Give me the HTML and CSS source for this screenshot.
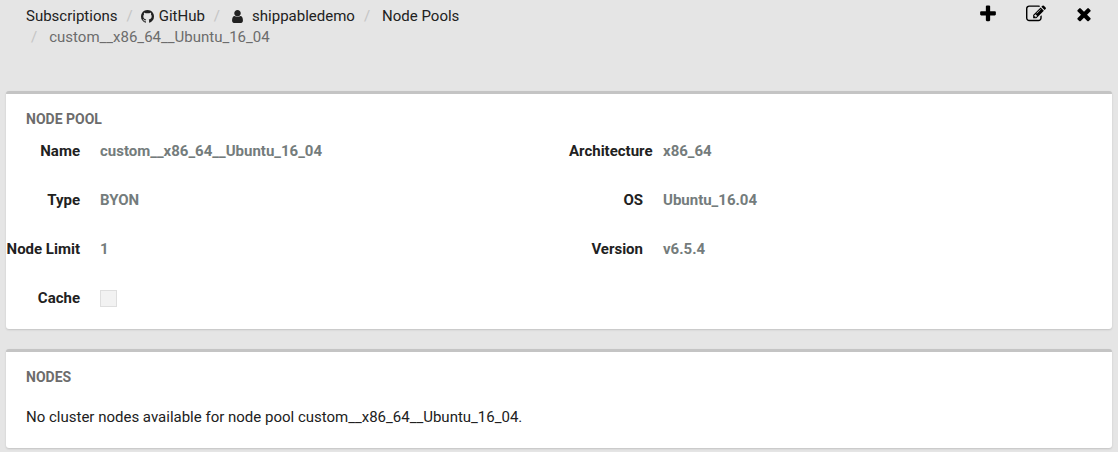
FILE: index.html
```html
<!DOCTYPE html>
<html lang="en">
<head>
<meta charset="utf-8">
<title>Node Pool</title>
<link rel="stylesheet" href="styles.css">
</head>
<body>
<header class="topbar">
  <nav aria-label="Breadcrumb">
    <ol class="breadcrumb">
      <li><a href="#">Subscriptions</a></li>
      <li><a href="#"><svg class="icon-github" viewBox="0 128 1536 1536" aria-hidden="true"><path d="M768 128q209 0 385.500 103t279.500 279.500 103 385.500q0 251-146.500 451.500t-378.500 277.500q-27 5-40-7t-13-30q0-3 .5-76.500t.5-134.500q0-97-52-142 57-6 102.500-18t94-39 81-66.500 53-105 20.500-150.500q0-119-79-206 37-91-8-204-28-9-81 11t-92 44l-38 24q-93-26-192-26t-192 26q-16-11-42.500-27t-83.500-38.500-85-13.500q-45 113-8 204-79 87-79 206 0 85 20.500 150t52.500 105 80.500 67 94 39 102.500 18q-39 36-49 103-21 10-45 15t-57 5-65.500-21.500-55.500-62.500q-19-32-48.500-52t-49.500-24l-20-3q-21 0-29 4.500t-5 11.500 9 14 13 12l7 5q22 10 43.500 38t31.500 51l10 23q13 38 44 61.500t67 30 69.500 7 55.500-3.500l23-4q0 38 .5 88.500t.5 54.500q0 18-13 30t-40 7q-232-77-378.500-277.500t-146.500-451.500q0-209 103-385.500t279.500-279.500 385.500-103z"/></svg>GitHub</a></li>
      <li class="wide"><a href="#"><svg class="icon-user" viewBox="256 128 1280 1536" aria-hidden="true"><path d="M1536 1399q0 109-62.500 187t-150.500 78h-854q-88 0-150.500-78t-62.500-187q0-85 8.500-160.500t31.500-152 58.500-131 94-89 134.500-34.500q131 128 313 128t313-128q76 0 134.500 34.500t94 89 58.500 131 31.500 152 8.500 160.500zm-256-887q0 159-112.500 271.500t-271.500 112.500-271.500-112.500-112.500-271.500 112.500-271.500 271.500-112.500 271.500 112.500 112.500 271.500z"/></svg>shippabledemo</a></li>
      <li class="wide"><a href="#">Node Pools</a></li>
      <li class="wide current" aria-current="page">custom__x86_64__Ubuntu_16_04</li>
    </ol>
  </nav>
  <div class="actions">
    <button type="button" aria-label="Add"><svg viewBox="0 0 1792 1792" aria-hidden="true"><path d="M1600 736v192q0 40-28 68t-68 28h-416v416q0 40-28 68t-68 28h-192q-40 0-68-28t-28-68v-416h-416q-40 0-68-28t-28-68v-192q0-40 28-68t68-28h416v-416q0-40 28-68t68-28h192q40 0 68 28t28 68v416h416q40 0 68 28t28 68z"/></svg></button>
    <button type="button" aria-label="Edit"><svg viewBox="0 0 1792 1792" aria-hidden="true"><path d="M888 1184l116-116-152-152-116 116v56h96v96h56zm440-720q-16-16-33 1l-350 350q-17 17-1 33t33-1l350-350q17-17 1-33zm80 594v190q0 119-84.500 203.500t-203.500 84.500h-832q-119 0-203.500-84.500t-84.500-203.500v-832q0-119 84.500-203.500t203.500-84.500h832q63 0 117 25 15 7 18 23 3 17-9 29l-49 49q-14 14-32 8-23-6-45-6h-832q-66 0-113 47t-47 113v832q0 66 47 113t113 47h832q66 0 113-47t47-113v-126q0-13 9-22l64-64q15-15 35-7t20 29zm-96-738l288 288-672 672h-288v-288zm444 132l-92 92-288-288 92-92q28-28 68-28t68 28l152 152q28 28 28 68t-28 68z"/></svg></button>
    <button type="button" aria-label="Close"><svg viewBox="0 0 1792 1792" aria-hidden="true"><path d="M1490 1322q0 40-28 68l-136 136q-28 28-68 28t-68-28l-294-294-294 294q-28 28-68 28t-68-28l-136-136q-28-28-28-68t28-68l294-294-294-294q-28-28-28-68t28-68l136-136q28-28 68-28t68 28l294 294 294-294q28-28 68-28t68 28l136 136q28 28 28 68t-28 68l-294 294 294 294q28 28 28 68z"/></svg></button>
  </div>
</header>
<main class="panels">
  <section class="panel">
    <h2>NODE POOL</h2>
    <div class="details">
      <dl class="fields">
        <div class="field"><dt>Name</dt><dd>custom__x86_64__Ubuntu_16_04</dd></div>
        <div class="field"><dt>Type</dt><dd>BYON</dd></div>
        <div class="field"><dt>Node Limit</dt><dd>1</dd></div>
        <div class="field"><dt><label for="cache">Cache</label></dt><dd><input class="check" type="checkbox" id="cache" disabled></dd></div>
      </dl>
      <dl class="fields">
        <div class="field"><dt>Architecture</dt><dd>x86_64</dd></div>
        <div class="field"><dt>OS</dt><dd>Ubuntu_16.04</dd></div>
        <div class="field"><dt>Version</dt><dd>v6.5.4</dd></div>
      </dl>
    </div>
  </section>
  <section class="panel">
    <h2>NODES</h2>
    <p class="message">No cluster nodes available for node pool custom__x86_64__Ubuntu_16_04.</p>
  </section>
</main>
</body>
</html>
```
FILE: styles.css
```css
* {
  box-sizing: border-box;
}

body {
  margin: 0;
  background: #e5e5e5;
  color: #212121;
  font: 15px/21px Roboto, "Liberation Sans", sans-serif;
}

.topbar {
  display: flex;
  justify-content: space-between;
  min-height: 91px;
  padding: 0 24px 0 22px;
}

.topbar nav {
  flex: 0 1 480px;
  padding-top: 6px;
}

.breadcrumb {
  display: flex;
  flex-wrap: wrap;
  margin: 0;
  padding: 0;
  list-style: none;
}

.breadcrumb li {
  display: flex;
  white-space: nowrap;
}

.breadcrumb li:first-child {
  padding-left: 4px;
}

.breadcrumb li + li::before {
  content: "/";
  margin: 0 8px 0 9px;
  color: #c4c4c4;
}

.breadcrumb .wide::before {
  margin-right: 12px;
}

.breadcrumb a {
  display: flex;
  align-items: center;
  color: #212121;
  text-decoration: none;
}

.breadcrumb .current {
  color: #6c6c6c;
}

.icon-github {
  width: 13px;
  height: 13px;
  margin-right: 5px;
  fill: #212121;
}

.icon-user {
  width: 11px;
  height: 13px;
  margin-right: 9px;
  fill: #212121;
}

.actions {
  display: flex;
  align-items: flex-start;
  gap: 28px;
  padding-top: 4px;
}

.actions button {
  padding: 0;
  border: 0;
  background: none;
  cursor: pointer;
}

.actions svg {
  display: block;
  width: 20px;
  height: 20px;
  fill: #000;
}

.panels {
  display: grid;
  gap: 20px;
  padding: 0 6px 4px;
}

.panel {
  border-top: 3px solid #c4c4c4;
  border-radius: 3px;
  background: #fff;
  box-shadow: 0 1px 2px rgba(0, 0, 0, 0.15);
}

.panel h2 {
  margin: 0;
  padding: 15px 20px 0;
  color: #6c6c6c;
  font-size: 14px;
  font-weight: 700;
  line-height: 20px;
}

.details {
  display: grid;
  grid-template-columns: 1fr 1fr;
  gap: 20px;
  padding: 12px 0 20px;
}

.fields {
  display: grid;
  align-content: start;
  gap: 28px;
  margin: 0;
}

.field {
  display: grid;
  grid-template-columns: 74px 1fr;
  gap: 20px;
  font-weight: 700;
}

.field dt {
  text-align: right;
  white-space: nowrap;
}

.field dd {
  margin: 0;
  color: #747c7c;
}

.check {
  display: block;
  width: 17px;
  height: 17px;
  margin: 2px 0 0;
  appearance: none;
  border: 1px solid #dedede;
  background: #f2f2f2;
}

.message {
  margin: 0;
  padding: 20px;
}
```
